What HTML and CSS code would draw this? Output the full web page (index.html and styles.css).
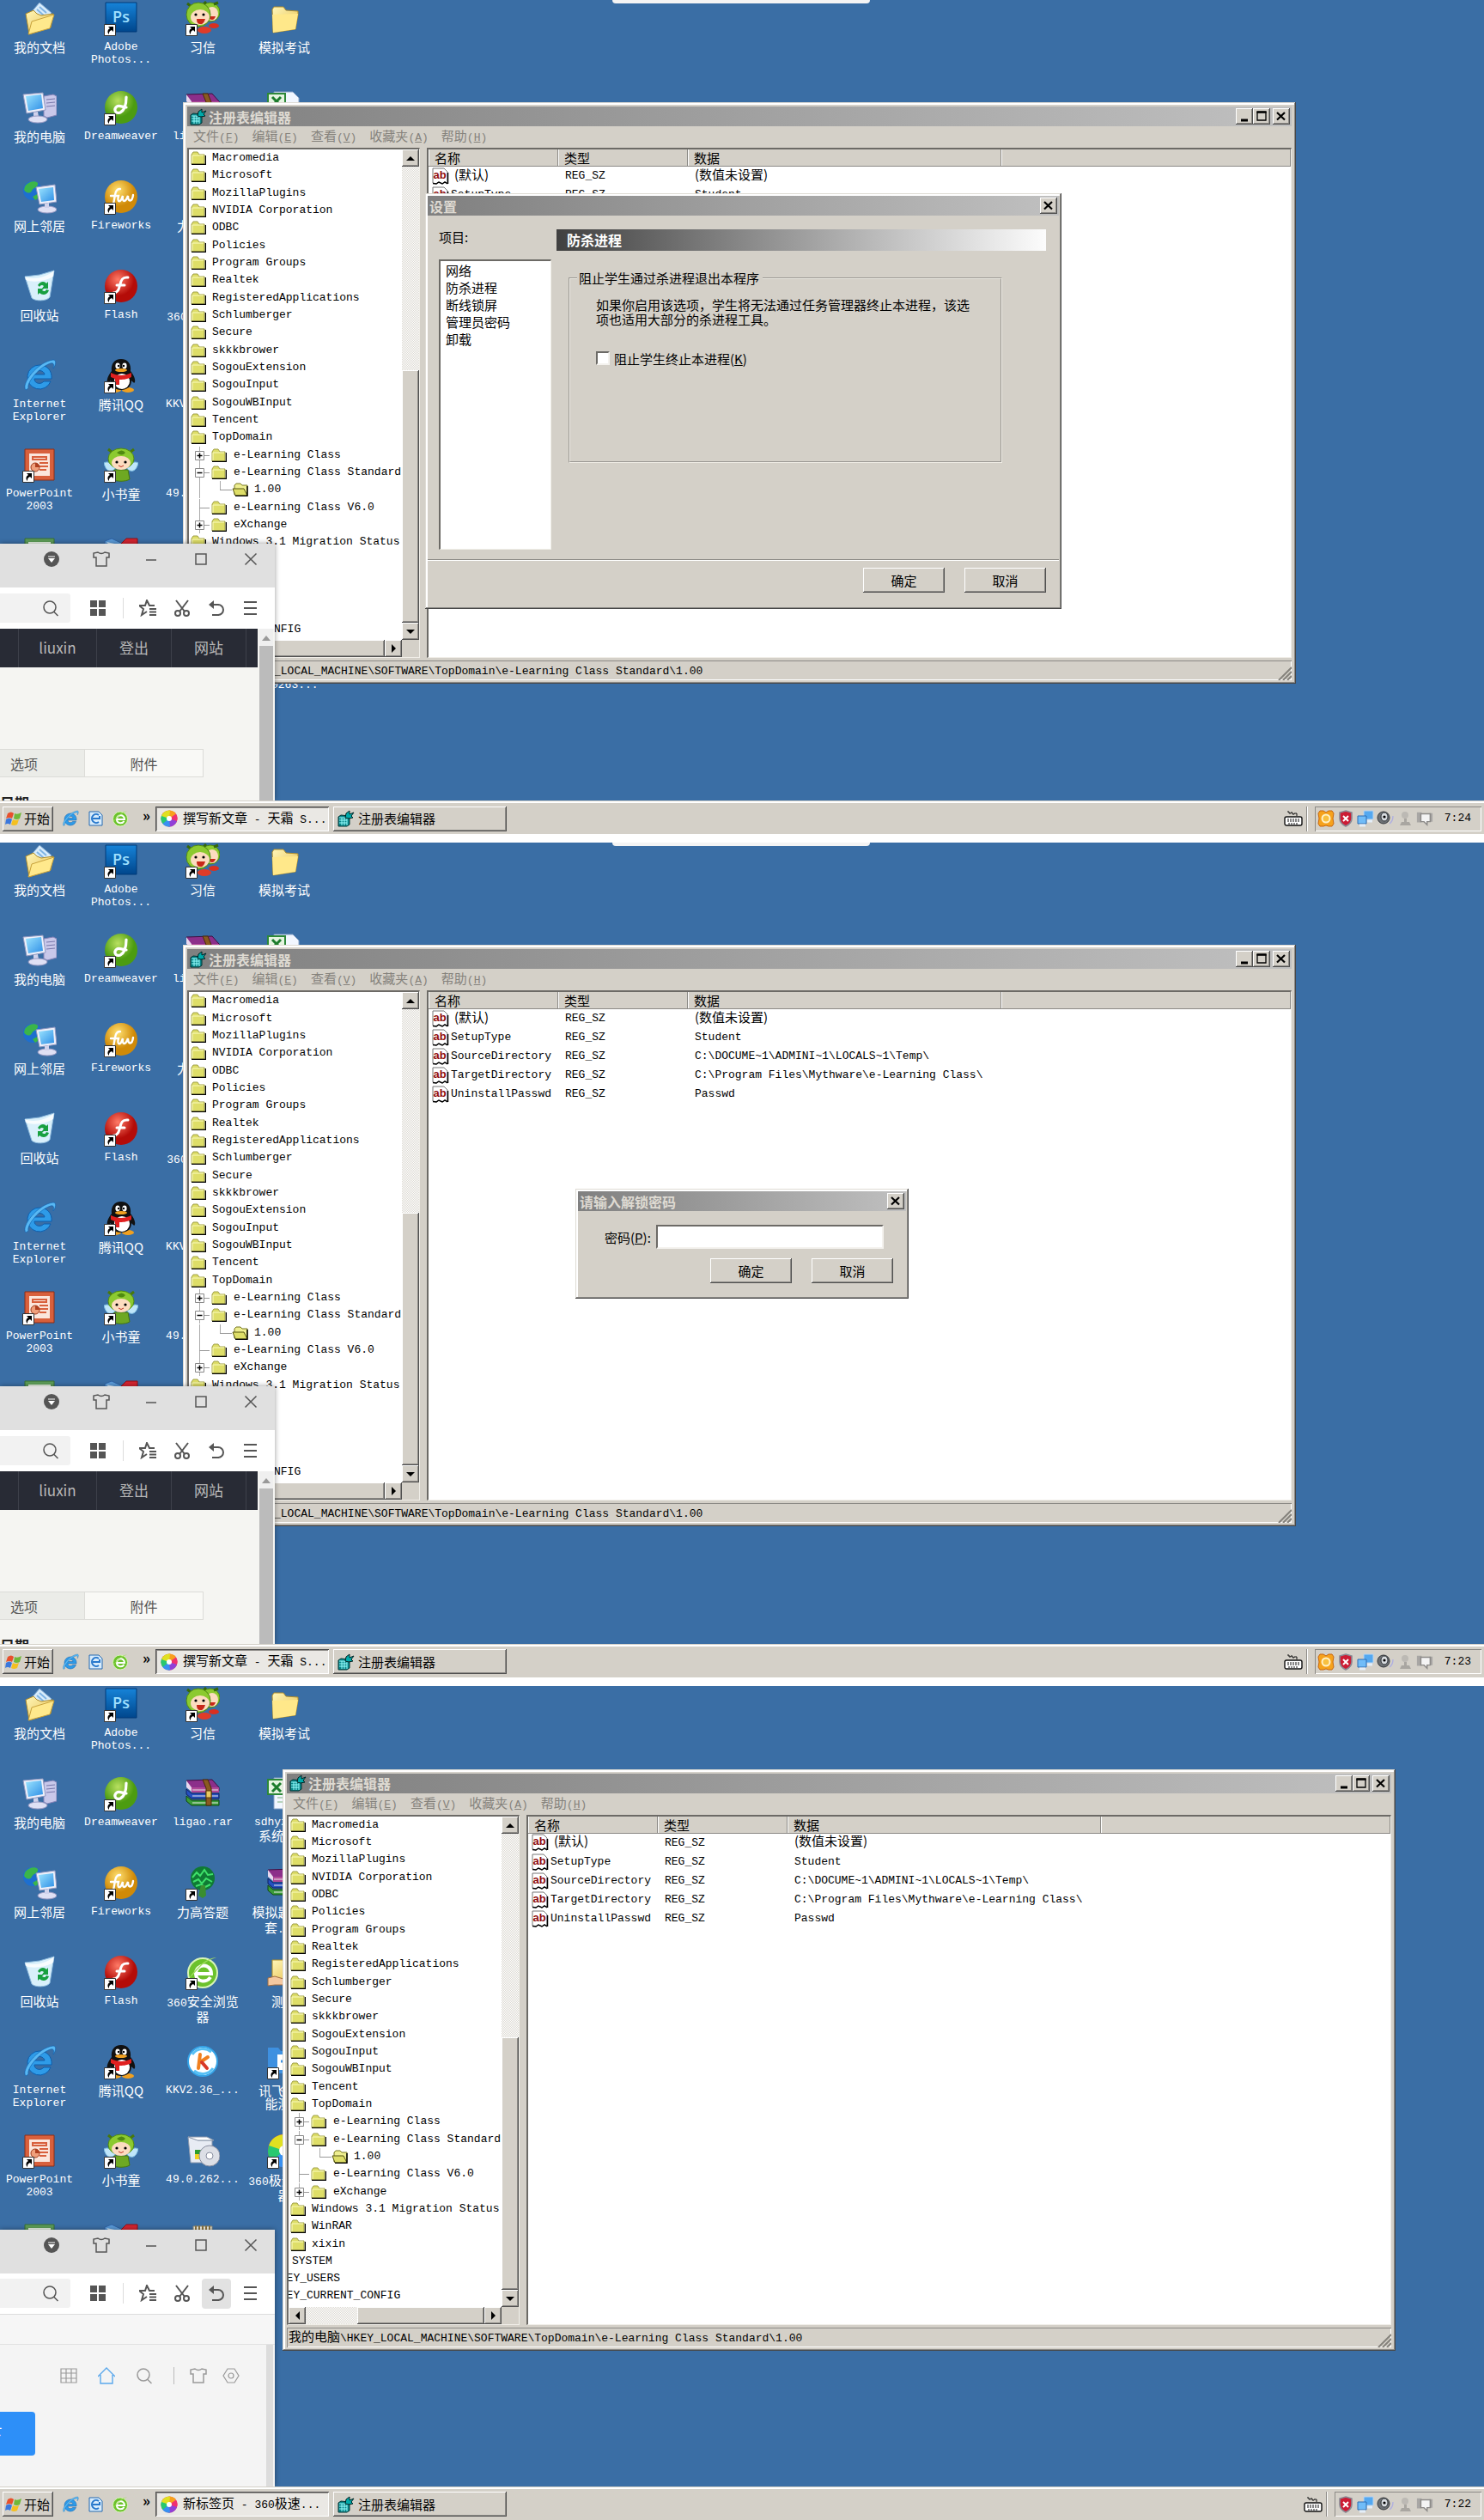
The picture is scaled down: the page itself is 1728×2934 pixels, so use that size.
FILE: index.html
```html
<!DOCTYPE html>
<html lang="zh-CN">
<head>
<meta charset="utf-8">
<title>注册表编辑器</title>
<link rel="stylesheet" href="styles.css">
</head>
<body>
<svg class="defs" aria-hidden="true">
<defs>
<linearGradient id="gPs" x1="0" y1="0" x2="0" y2="1"><stop offset="0" stop-color="#1683d8"/><stop offset="1" stop-color="#00468c"/></linearGradient>
<radialGradient id="gGreen" cx=".4" cy=".3"><stop offset="0" stop-color="#b8e060"/><stop offset="1" stop-color="#4c9c10"/></radialGradient>
<radialGradient id="gGold" cx=".4" cy=".3"><stop offset="0" stop-color="#ffe070"/><stop offset="1" stop-color="#d08a08"/></radialGradient>
<radialGradient id="gRed" cx=".4" cy=".3"><stop offset="0" stop-color="#ff7a66"/><stop offset="1" stop-color="#b40c08"/></radialGradient>
<linearGradient id="gScr" x1="0" y1="0" x2="1" y2="1"><stop offset="0" stop-color="#9be4ff"/><stop offset="1" stop-color="#2f8fe6"/></linearGradient>
<linearGradient id="gFold" x1="0" y1="0" x2="1" y2="1"><stop offset="0" stop-color="#fff6b8"/><stop offset="1" stop-color="#e6c050"/></linearGradient>
</defs>
<symbol id="docs" viewBox="0 0 40 40"><path d="M20 2l14 12-10 12L8 16z" fill="#d8ecfb" stroke="#7ea8d0"/><path d="M20 7l8 7M17 10l8 7" stroke="#7fb4e4" stroke-width="2"/><path d="M4 15l9-4 4 4 5 2 14-2-3 16-25 8z" fill="url(#gFold)" stroke="#b08c28"/><path d="M7 39l4-15 26-8-5 16z" fill="#ffe98c" stroke="#c8a23c"/></symbol>
<symbol id="folder" viewBox="0 0 40 40"><path d="M6 10l2-3h11l3 4 14 1v4l-3 17-26 4z" fill="url(#gFold)" stroke="#b08c28"/><path d="M6 16l30-1-3 18-26 4z" fill="#ffe88a"/></symbol>
<symbol id="pc" viewBox="0 0 40 40"><path d="M25 7l11-2 4 2v22l-11 3-4-2z" fill="#c9c8ea" stroke="#8684b8"/><path d="M28 11l10-1M28 15l10-1M28 19l10-1" stroke="#77a"/><path d="M1 5l23-2 3 20-22 4z" fill="#eef0fa" stroke="#9098c0"/><path d="M4 7l18-2 2 16-17 3z" fill="url(#gScr)"/><path d="M13 26l5-1 1 6-6 1z" fill="#d0d2ec"/><ellipse cx="18" cy="34" rx="11" ry="4" fill="#dfe0f4" stroke="#9a9cc4"/></symbol>
<symbol id="net" viewBox="0 0 40 40"><circle cx="12" cy="13" r="11" fill="#1d6fd0"/><path d="M3 8c4-6 12-7 15-4 1 5-5 5-7 9s-7 3-9-1zM12 20l7-4 2 4-6 4z" fill="#3bb54a"/><path d="M16 9l22-3 2 20-20 3z" fill="#eef0fa" stroke="#9098c0"/><path d="M19 11l17-2 1 15-15 2z" fill="url(#gScr)"/><ellipse cx="29" cy="35" rx="11" ry="4" fill="#dfe0f4" stroke="#9a9cc4"/><path d="M26 28l5-1v6h-5z" fill="#d0d2ec"/></symbol>
<symbol id="bin" viewBox="0 0 40 40"><path d="M3 9l17-2 17-5-5 31c-4 5-17 5-21 1z" fill="#d9f0fb" stroke="#8ab8dc"/><path d="M3 9c8 4 24 2 34-7l-1 7c-10 6-24 7-32 4z" fill="#fff" opacity=".8"/><path d="M18 19c3-5 8-5 10-2l2-2v8h-7l2-3c-2-2-4-1-5 1zM31 25c-2 6-8 6-11 3l-2 2v-7h7l-2 2c3 2 4 1 5-1z" fill="#18a040"/></symbol>
<symbol id="ie" viewBox="0 0 40 40"><path d="M20 8a14 14 0 1 0 13 19h-8c-3 4-11 3-11-3h20C35 14 28 8 20 8zm-6 11c1-6 11-6 12 0z" fill="#2e9be8" stroke="#0d5fae"/><path d="M4 37C-2 30 18 4 36 2c4 0 3 6 0 10 1-4 1-7-3-6C20 10 5 28 7 35z" fill="#58b8f4" stroke="#0d5fae" stroke-width=".6"/></symbol>
<symbol id="ppt" viewBox="0 0 40 40"><path d="M3 2h34v36H3z" fill="#d8603c" stroke="#8e2c14"/><path d="M8 7h24v26H8z" fill="#fbe6dc"/><path d="M12 11h16v3H12zM20 18h10M20 22h10M20 26h8" fill="none" stroke="#d8603c" stroke-width="2"/><circle cx="15" cy="23" r="5" fill="#f0a07c" stroke="#a03c1c"/><path d="M15 23v-5a5 5 0 0 1 5 5z" fill="#b04020"/></symbol>
<symbol id="xlrow" viewBox="0 0 40 40"><path d="M3 2h34v36H3z" fill="#5d9c58" stroke="#376e34"/><path d="M7 6h26v28H7z" fill="#e9f5e6"/></symbol>
<symbol id="ps" viewBox="0 0 40 40"><path d="M2 2h36v34H2z" fill="url(#gPs)" stroke="#003a78"/><text x="20" y="25" font-family="Open Sans,sans-serif" font-weight="600" font-size="18" fill="#9fe0ff" text-anchor="middle">Ps</text></symbol>
<symbol id="dw" viewBox="0 0 40 40"><circle cx="20" cy="20" r="19" fill="url(#gGreen)"/><path d="M26 8c0 8-1 15-7 18-6 2-8-4-4-7 3-2 7 1 11 1" fill="none" stroke="#fff" stroke-width="3.2" stroke-linecap="round"/></symbol>
<symbol id="fw" viewBox="0 0 40 40"><circle cx="20" cy="20" r="19" fill="url(#gGold)"/><path d="M19 11c-6-1-6 8-8 18M8 19h9c-2 8 2 9 5 0-1 8 3 8 6 0 0 8 5 7 6-1" fill="none" stroke="#fff" stroke-width="2.4" stroke-linecap="round"/></symbol>
<symbol id="fl" viewBox="0 0 40 40"><circle cx="20" cy="20" r="19" fill="url(#gRed)"/><path d="M28 10c-8-1-8 5-10 11-1 5-3 7-7 7M15 19h9" fill="none" stroke="#fff" stroke-width="3" stroke-linecap="round"/></symbol>
<symbol id="qq" viewBox="0 0 40 40"><ellipse cx="13" cy="37" rx="7" ry="3" fill="#f0a020"/><ellipse cx="28" cy="37" rx="7" ry="3" fill="#f0a020"/><path d="M20 1c8 0 12 6 11 14 4 5 6 10 5 13-1 2-3-1-4-2 0 7-5 11-12 11S8 33 8 26c-1 1-3 4-4 2-1-3 1-8 5-13C8 7 12 1 20 1z" fill="#111"/><ellipse cx="21" cy="27" rx="9" ry="9" fill="#fff"/><ellipse cx="16" cy="9" rx="2.6" ry="3.4" fill="#fff"/><ellipse cx="24" cy="9" rx="2.6" ry="3.4" fill="#fff"/><circle cx="17" cy="9" r="1.2"/><circle cx="23" cy="9" r="1.2"/><ellipse cx="20" cy="14" rx="7" ry="2" fill="#f0a020"/><path d="M8 17c8 4 16 4 24 0v5c-6 3-11 3-14 3v6h-5v-7l-5-2z" fill="#e02020"/></symbol>
<symbol id="bee" viewBox="0 0 40 40"><path d="M0 18c5-3 10 1 13 7-6 5-11 2-13-7zM40 18c-5-3-10 1-13 7 6 5 11 2 13-7z" fill="#bfe6fa" stroke="#78b8e0"/><path d="M12 26h16l2 11c-5 3-15 3-20 0z" fill="#6ea822" stroke="#47780c"/><path d="M10 6L5 2M30 6l5-4" stroke="#47780c" stroke-width="3"/><ellipse cx="20" cy="13" rx="15" ry="12" fill="#8cca30" stroke="#4f8a10"/><ellipse cx="20" cy="18" rx="11" ry="8" fill="#fcdcc0"/><circle cx="15" cy="17" r="1.600"/><circle cx="25" cy="17" r="1.600"/><path d="M17 21q3 3 6 0" stroke="#c03020" fill="none"/><path d="M15 6q6-5 10 0-4 5-10 0z" fill="#4f8a10"/></symbol>
<symbol id="redblue" viewBox="0 0 40 40"><path d="M1 5l8-3 13 6v18L1 34z" fill="#5a9ad8" stroke="#2e62a4"/><path d="M20 8l6-6h13v22l-16 4z" fill="#d42430" stroke="#8c1018"/><path d="M3 6l14 3-3 9z" fill="#cfe8fb"/></symbol>
<symbol id="xixin" viewBox="0 0 40 40"><ellipse cx="33" cy="29" rx="6" ry="3" fill="#d83020"/><circle cx="29" cy="13" r="11" fill="#8cca30" stroke="#4f8a10"/><ellipse cx="31" cy="15" rx="7" ry="8" fill="#fcdcc0"/><path d="M28 18h7q-2 6-7 3z" fill="#c82818"/><ellipse cx="22" cy="34" rx="8" ry="4" fill="#e03c28"/><path d="M6 6L2 3M20 5l4-4M33 4l5-2" stroke="#35680a" stroke-width="3"/><circle cx="15" cy="16" r="14" fill="#8cca30" stroke="#4f8a10"/><ellipse cx="17" cy="19" rx="11" ry="9" fill="#fcdcc0"/><circle cx="12" cy="16" r="1.600"/><circle cx="21" cy="16" r="1.600"/><path d="M13 21h10q-2 7-6 6-4 0-4-6z" fill="#c82818"/></symbol>
<symbol id="rar" viewBox="0 0 40 40"><path d="M1 5l30-1 8 9v4H7z" fill="#8c2f8a" stroke="#3c1040"/><path d="M1 5l6 8v5l-6-5z" fill="#e8d8ee"/><path d="M7 13h32v6H7z" fill="#b04898"/><path d="M1 15l6 5h32v6H7l-6-5z" fill="#2450c0" stroke="#102060"/><path d="M1 23l6 5h32v6H7l-6-5z" fill="#3a9c38" stroke="#104810"/><path d="M8 23h30M8 31h30M8 16h30" stroke="#e8e8e8"/><path d="M20 4h6l4 10v20h-6V14z" fill="#8a5a20" stroke="#4a2c08"/><path d="M24 17h6v8h-6z" fill="#e8c860" stroke="#5a3c08"/></symbol>
<symbol id="tree" viewBox="0 0 40 40"><circle cx="20" cy="15" r="14" fill="#0f7a34"/><path d="M8 14l5-6 4 4 5-7 4 6 6-1M9 19l6-3 4 5 5-6 7 4M12 24l6-2 5 3 6-3" stroke="#3ee06a" stroke-width="2" fill="none"/><path d="M18 23h5l1 12-4 3-5-3z" fill="#3a8e30"/></symbol>
<symbol id="e360" viewBox="0 0 40 40"><circle cx="20" cy="21" r="17" fill="#6cc22c" stroke="#d8f4b8" stroke-width="2"/><path d="M11 22h19c0-13-18-12-18 0 0 10 13 11 17 4" fill="none" stroke="#fff" stroke-width="4"/><path d="M4 28C12 14 26 3 36 3c-7 2-14 6-18 10" fill="#a4e060"/></symbol>
<symbol id="kk" viewBox="0 0 40 40"><circle cx="20" cy="20" r="17" fill="#fff" stroke="#35a4e8" stroke-width="2"/><path d="M8 12a15 15 0 0 1 22-3M32 28a15 15 0 0 1-22 3" stroke="#58c0f4" stroke-width="3" fill="none"/><path d="M17 12l-2 16M26 15l-9 6" stroke="#f08020" stroke-width="4" stroke-linecap="round"/><path d="M19 21l6 7" stroke="#d83828" stroke-width="4" stroke-linecap="round"/></symbol>
<symbol id="setup" viewBox="0 0 40 40"><path d="M3 4l12 4h16v26H6z" fill="#e8ecf4" stroke="#8c98ac"/><path d="M3 4h22l8 4H14z" fill="#fff" stroke="#8c98ac"/><path d="M11 19h10v11H11z" fill="#2c9c2c"/><path d="M11 24h7v6h-7z" fill="#f0d020"/><circle cx="28" cy="26" r="12" fill="#dcdfe6" stroke="#888ea0"/><circle cx="28" cy="26" r="4" fill="#fff" stroke="#888ea0"/></symbol>
<symbol id="note" viewBox="0 0 40 40"><path d="M9 4h22v34H9z" fill="#f4f2e4" stroke="#8c8a78"/><path d="M11 6h19" stroke="#8c7440" stroke-width="5" stroke-dasharray="2 2"/></symbol>
<symbol id="xls" viewBox="0 0 40 40"><path d="M8 2h22l7 7v29H8z" fill="#f2f7ff" stroke="#8aa4c8"/><path d="M12 20h22M12 25h22M12 30h22M20 16v20" stroke="#7ab07a"/><path d="M1 4h20v17H1z" fill="#e4f4e0" stroke="#2c8838" stroke-width="2"/><path d="M6 8l10 10M16 8L6 18" stroke="#1c7c2c" stroke-width="3"/></symbol>
<symbol id="share" viewBox="0 0 40 40"><path d="M6 6h12l3 4h15v18H6z" fill="url(#gFold)" stroke="#b08c28"/><path d="M1 27l8-2 10 3 12 1-8 6H9l-8 1z" fill="#f4c8a0" stroke="#a06c40"/></symbol>
<symbol id="app" viewBox="0 0 40 40"><path d="M1 4h12l3 4h22v26H1z" fill="#3e90e0"/><path d="M12 12h20v18H12z" fill="#fff"/><path d="M16 20h12" stroke="#3e90e0" stroke-width="3"/></symbol>
<symbol id="wheel" viewBox="0 0 40 40"><circle cx="20" cy="20" r="19" fill="#f04438"/><path d="M20 20L20 1A19 19 0 0 1 38 15z" fill="#f8a01c"/><path d="M20 20L36 9a19 19 0 0 1 1 19z" fill="#f03070"/><path d="M20 20l18 6A19 19 0 0 1 18 39z" fill="#9040d8"/><path d="M20 20l2 19A19 19 0 0 1 3 29z" fill="#3890f0"/><path d="M20 20L5 32A19 19 0 0 1 4 10z" fill="#28c870"/><path d="M20 20L2 14A19 19 0 0 1 22 1z" fill="#e0e020"/><circle cx="20" cy="20" r="6" fill="#fff"/></symbol>
<symbol id="reg" viewBox="0 0 20 20"><path d="M1 8l3-2 10 1v10l-3 2H1z" fill="#08868a" stroke="#033"/><path d="M2 9h9v9M5 9v9M8 9v9M2 12h9M2 15h9" stroke="#9ff" fill="none"/><path d="M10 4l4-3v4l5-2-3 4 2 2-5 1-4-1z" fill="#0aa" stroke="#022"/></symbol>
<symbol id="win" viewBox="0 0 20 20"><path d="M3 4q4-3 7 0L8 10q-3-2-7 0z" fill="#e8502c"/><path d="M11 4q3 2 8-1l-2 7q-4 2-7 0z" fill="#70b838"/><path d="M1 11q4-3 7 0l-2 6q-3-2-6 0z" fill="#3c78dc"/><path d="M9 11q3 2 7 0l-2 6q-4 2-7 0z" fill="#f4c020"/></symbol>
<symbol id="oe" viewBox="0 0 20 20"><path d="M3 2h11l4 4v12H3z" fill="#d8ecfc" stroke="#2468b0"/><path d="M14 6a5 5 0 1 0 0 8M7 10h8V7" fill="none" stroke="#2878cc" stroke-width="2"/></symbol>
<symbol id="kbd" viewBox="0 0 22 18"><path d="M4 1h2v2h2V2h2v2h2V3h3v3" stroke="#111" fill="none"/><rect x="1" y="7" width="20" height="10" rx="2" fill="#fff" stroke="#111" stroke-width="1.4"/><path d="M4 10h15M4 12h15M5 15h11" stroke="#111" stroke-width="1.2" stroke-dasharray="2 1"/></symbol>
<symbol id="org" viewBox="0 0 20 20"><path d="M3 1h4l3 2 3-2h4l2 3-1 6 1 6-2 3h-4l-3-1-3 1H3l-2-3 1-6-1-6z" fill="#f6a21c" stroke="#c8660c"/><circle cx="10" cy="10" r="4.500" fill="#f8c040" stroke="#fff2c8" stroke-width="2"/></symbol>
<symbol id="shield" viewBox="0 0 20 20"><path d="M10 1l7 2v7c0 5-3 7-7 9-4-2-7-4-7-9V3z" fill="#cc1c34" stroke="#8a8a94" stroke-width="1.6"/><path d="M7 7l6 6M13 7l-6 6" stroke="#fff" stroke-width="2"/></symbol>
<symbol id="lan" viewBox="0 0 20 20"><path d="M8 1h11v10H8z" fill="#54a8f0" stroke="#b8d4f0"/><path d="M1 7h10v9H1z" fill="#70bcf8" stroke="#2c6cb4"/><path d="M3 18h7M12 13h6" stroke="#e4eef8" stroke-width="3"/></symbol>
<symbol id="spk" viewBox="0 0 20 20"><circle cx="8" cy="9" r="7" fill="#6c7074" stroke="#34383c"/><ellipse cx="9" cy="8" rx="4" ry="5" fill="#d8dce0" stroke="#34383c"/><circle cx="9" cy="8" r="1.6"/><path d="M15 16q4-3 4-9" stroke="#b0b0e0" fill="none" stroke-width="1.4"/></symbol>
<symbol id="man" viewBox="0 0 20 20"><circle cx="10" cy="6" r="4" fill="#bcb9b4"/><path d="M9 10h3v4h3l2 4H4l2-4h3z" fill="#a9a6a1"/></symbol>
<symbol id="flag" viewBox="0 0 22 20"><path d="M1 2h6v13H1zM17 3h4v11h-4z" fill="#a8a6a4"/><path d="M6 4h12v10h-4v4l-4-4H6z" fill="#f4f4f4" stroke="#8c8a88" stroke-width="1.6"/></symbol>
<symbol id="min" viewBox="0 0 20 19"><path d="M6 14h8" stroke="#000" stroke-width="3"/></symbol>
<symbol id="max" viewBox="0 0 20 19"><path d="M5 4.500h10v9.500H5z" fill="none" stroke="#000" stroke-width="1.300"/><path d="M4.400 4.500h11.200" stroke="#000" stroke-width="2.500"/></symbol>
<symbol id="cls" viewBox="0 0 20 19"><path d="M5 5l9 8.500M14 5l-9 8.500" stroke="#000" stroke-width="2.200"/></symbol>
<symbol id="ab" viewBox="0 0 20 20"><path d="M1 1h13l4 4v13l-3-1-3 2-4-2-3 2-4-1z" fill="#fff" stroke="#777"/><path d="M18.500 6v13M1 18.500l4 .5 3-2 4 2 3-2 3 2" stroke="#000" stroke-width="1.500" fill="none"/><text x="9" y="13" font-family="Liberation Sans,sans-serif" font-weight="700" font-size="13" fill="#900c0c" text-anchor="middle">ab</text></symbol>
<symbol id="grip" viewBox="0 0 16 16"><path d="M1 16L16 1M6 16L16 6M11 16l5-5" stroke="#85827c" stroke-width="2"/></symbol>
<symbol id="badge" viewBox="0 0 20 20"><circle cx="10" cy="10" r="9" fill="#555"/><path d="M6 9h8l-4 5z" fill="#fff"/><path d="M6 7h8" stroke="#fff"/></symbol>
<symbol id="shirt" viewBox="0 0 20 20"><path d="M6 2q4 3 8 0l5 1v5h-3v10H4V8H1V3z" fill="none" stroke="currentColor" stroke-width="1.500"/></symbol>
<symbol id="bmin" viewBox="0 0 20 20"><path d="M4 11h12" stroke="#555" stroke-width="1.500"/></symbol>
<symbol id="bmax" viewBox="0 0 20 20"><path d="M4 4h12v12H4z" fill="none" stroke="#555" stroke-width="1.500"/></symbol>
<symbol id="bcls" viewBox="0 0 20 20"><path d="M3.500 3.500l13 13M16.500 3.500l-13 13" stroke="#555" stroke-width="1.500"/></symbol>
<symbol id="find" viewBox="0 0 20 20"><circle cx="9" cy="9" r="7" fill="none" stroke="currentColor" stroke-width="1.500"/><path d="M13.500 14l5 5" stroke="currentColor" stroke-width="1.500"/></symbol>
<symbol id="four" viewBox="0 0 20 20"><path d="M1 1h8v8H1zM11 1h8v8h-8zM1 11h8v8H1zM11 11h8v8h-8z" fill="#555"/></symbol>
<symbol id="star" viewBox="0 0 20 20"><path d="M18 7h-6L9 1 7 7H0l5 4-2 7 6-4M12 11h8M12 14.500h8M12 18h8" fill="none" stroke="#555" stroke-width="2"/></symbol>
<symbol id="cut" viewBox="0 0 20 20"><path d="M3 1l10 13M17 1L7 14" stroke="#555" stroke-width="2"/><circle cx="5" cy="16" r="3" fill="none" stroke="#555" stroke-width="2"/><circle cx="15" cy="16" r="3" fill="none" stroke="#555" stroke-width="2"/></symbol>
<symbol id="undo" viewBox="0 0 20 20"><path d="M3 6h9a6 6 0 0 1 0 12H5" fill="none" stroke="#555" stroke-width="2"/><path d="M7 1v10L1 6z" fill="#555"/></symbol>
<symbol id="bars" viewBox="0 0 20 20"><path d="M2 3h15M2 10h15M2 17h15" stroke="#555" stroke-width="2"/></symbol>
<symbol id="table" viewBox="0 0 20 20"><path d="M1 2h18v16H1zM1 7h18M1 13h18M7 2v16M13 2v16" fill="none" stroke="#999" stroke-width="1.200"/></symbol>
<symbol id="home" viewBox="0 0 20 20"><path d="M0 11L10 1l10 10M3 9v10h14V9" fill="none" stroke="#5aa8ec" stroke-width="1.400"/></symbol>
<symbol id="hex" viewBox="0 0 20 20"><path d="M6 2h8l5 8-5 8H6l-5-8z" fill="none" stroke="#999" stroke-width="1.200"/><circle cx="10" cy="10" r="3" fill="none" stroke="#999" stroke-width="1.200"/></symbol>
</svg>

<main class="page">

<section class="shot">
<div class="screen">
<nav class="icons">
<a href="#"><svg><use href="#docs"/></svg><b>我的文档</b></a>
<a href="#"><svg><use href="#pc"/></svg><b>我的电脑</b></a>
<a href="#"><svg><use href="#net"/></svg><b>网上邻居</b></a>
<a href="#"><svg><use href="#bin"/></svg><b>回收站</b></a>
<a href="#"><svg><use href="#ie"/></svg>Internet Explorer</a>
<a href="#" class="lnk"><svg><use href="#ppt"/></svg>PowerPoint 2003</a>
<a href="#"><svg><use href="#xlrow"/></svg></a>
<a href="#" class="lnk"><svg><use href="#ps"/></svg>Adobe Photos...</a>
<a href="#" class="lnk"><svg><use href="#dw"/></svg>Dreamweaver</a>
<a href="#" class="lnk"><svg><use href="#fw"/></svg>Fireworks</a>
<a href="#" class="lnk"><svg><use href="#fl"/></svg>Flash</a>
<a href="#" class="lnk"><svg><use href="#qq"/></svg><b>腾讯QQ</b></a>
<a href="#" class="lnk"><svg><use href="#bee"/></svg><b>小书童</b></a>
<a href="#"><svg><use href="#redblue"/></svg></a>
<a href="#" class="lnk"><svg><use href="#xixin"/></svg><b>习信</b></a>
<a href="#"><svg><use href="#rar"/></svg>ligao.rar</a>
<a href="#" class="lnk"><svg><use href="#tree"/></svg><b>力高答题</b></a>
<a href="#" class="lnk"><svg><use href="#e360"/></svg><span>360<b>安全浏览器</b></span></a>
<a href="#"><svg><use href="#kk"/></svg>KKV2.36_...</a>
<a href="#"><svg><use href="#setup"/></svg>49.0.262...</a>
<a href="#"><svg><use href="#note"/></svg></a>
<a href="#"><svg><use href="#folder"/></svg><b>模拟考试</b></a>
<a href="#"><svg><use href="#xls"/></svg></a>
</nav>
<div class="peek"></div>
<p class="stray">0263...</p>
<article class="win reg">
<header class="title"><svg><use href="#reg"/></svg><h2>注册表编辑器</h2><button aria-label="最小化"><svg><use href="#min"/></svg></button><button aria-label="最大化"><svg><use href="#max"/></svg></button><button class="x" aria-label="关闭"><svg><use href="#cls"/></svg></button></header>
<nav class="menu"><button>文件<i>(<u>F</u>)</i></button><button>编辑<i>(<u>E</u>)</i></button><button>查看<i>(<u>V</u>)</i></button><button>收藏夹<i>(<u>A</u>)</i></button><button>帮助<i>(<u>H</u>)</i></button></nav>
<div class="panes">
<div class="keys">
<ul class="tree"><li>Macromedia<li>Microsoft<li>MozillaPlugins<li>NVIDIA Corporation<li>ODBC<li>Policies<li>Program Groups<li>Realtek<li>RegisteredApplications<li>Schlumberger<li>Secure<li>skkkbrower<li>SogouExtension<li>SogouInput<li>SogouWBInput<li>Tencent<li>TopDomain<li class="sub plus">e-Learning Class<li class="sub minus">e-Learning Class Standard<li class="leaf">1.00<li class="sub">e-Learning Class V6.0<li class="sub plus">eXchange<li>Windows 3.1 Migration Status<li>WinRAR<li>xixin<li class="hive">SYSTEM<li class="root">HKEY_USERS<li class="root">HKEY_CURRENT_CONFIG</ul>
<div class="vbar"><button class="up" aria-label="上"></button><span></span><button class="down" aria-label="下"></button></div>
<div class="hbar"><button class="left" aria-label="左"></button><span></span><button class="right" aria-label="右"></button></div>
</div>
<div class="values"><table>
<thead><tr><th>名称<th>类型<th>数据<th></thead>
<tbody><tr><td><svg><use href="#ab"/></svg><q class="dflt">(默认)</q><td>REG_SZ<td><q>(数值未设置)</q><td><tr><td><svg><use href="#ab"/></svg>SetupType<td>REG_SZ<td>Student<td><tr><td><svg><use href="#ab"/></svg>SourceDirectory<td>REG_SZ<td>C:\DOCUME~1\ADMINI~1\LOCALS~1\Temp\<td><tr><td><svg><use href="#ab"/></svg>TargetDirectory<td>REG_SZ<td>C:\Program Files\Mythware\e-Learning Class\<td><tr><td><svg><use href="#ab"/></svg>UninstallPasswd<td>REG_SZ<td>Passwd<td></tbody>
</table></div>
</div>
<footer class="status"><span><q>我的电脑</q>\HKEY_LOCAL_MACHINE\SOFTWARE\TopDomain\e-Learning Class Standard\1.00</span><svg><use href="#grip"/></svg></footer>
</article>

<form class="win dlg settings">
<header class="title"><h2>设置</h2><button type="button" class="x" aria-label="关闭"><svg><use href="#cls"/></svg></button></header>
<div class="body">
<label for="items">项目:</label>
<h3>防杀进程</h3>
<select id="items" size="6"><option>网络<option>防杀进程<option>断线锁屏<option>管理员密码<option>卸载</select>
<fieldset><legend>阻止学生通过杀进程退出本程序</legend>
<p>如果你启用该选项，学生将无法通过任务管理器终止本进程，该选项也适用大部分的杀进程工具。</p>
<div class="tick"><input type="checkbox" id="kill"><label for="kill">阻止学生终止本进程(<u>K</u>)</label></div>
</fieldset>
</div>
<footer class="acts"><button type="button">确定</button><button type="button">取消</button></footer>
</form>

<aside class="browser">
<header><svg><use href="#badge"/></svg><svg><use href="#shirt"/></svg><svg><use href="#bmin"/></svg><svg><use href="#bmax"/></svg><svg><use href="#bcls"/></svg></header>
<div class="tools"><span class="find"><svg><use href="#find"/></svg></span><button class="apps" aria-label="应用"><svg><use href="#four"/></svg></button><hr><button aria-label="收藏"><svg><use href="#star"/></svg></button><button aria-label="截图"><svg><use href="#cut"/></svg></button><button aria-label="恢复"><svg><use href="#undo"/></svg></button><button aria-label="菜单"><svg><use href="#bars"/></svg></button></div>
<div class="view">
<div class="doc"><nav class="dark"><a href="#">liuxin</a><a href="#">登出</a><a href="#">网站</a></nav>
<div class="tabs"><button class="on">选项</button><button>附件</button></div><h4>日期</h4></div>
<div class="slide"></div>
</div>
</aside>
</div>
<footer class="taskbar"><button class="start"><svg><use href="#win"/></svg>开始</button>
<div class="quick"><svg><use href="#ie"/></svg><svg><use href="#oe"/></svg><svg><use href="#e360"/></svg><strong>»</strong></div>
<button class="task on"><svg><use href="#wheel"/></svg><span>撰写新文章<i> - </i>天霜<i> S...</i></span></button><button class="task"><svg><use href="#reg"/></svg><span>注册表编辑器</span></button>
<svg class="kbd"><use href="#kbd"/></svg>
<div class="tray"><svg><use href="#org"/></svg><svg><use href="#shield"/></svg><svg><use href="#lan"/></svg><svg><use href="#spk"/></svg><svg><use href="#man"/></svg><svg><use href="#flag"/></svg><time>7:24</time></div></footer>
</section>

<section class="shot">
<div class="screen">
<nav class="icons">
<a href="#"><svg><use href="#docs"/></svg><b>我的文档</b></a>
<a href="#"><svg><use href="#pc"/></svg><b>我的电脑</b></a>
<a href="#"><svg><use href="#net"/></svg><b>网上邻居</b></a>
<a href="#"><svg><use href="#bin"/></svg><b>回收站</b></a>
<a href="#"><svg><use href="#ie"/></svg>Internet Explorer</a>
<a href="#" class="lnk"><svg><use href="#ppt"/></svg>PowerPoint 2003</a>
<a href="#"><svg><use href="#xlrow"/></svg></a>
<a href="#" class="lnk"><svg><use href="#ps"/></svg>Adobe Photos...</a>
<a href="#" class="lnk"><svg><use href="#dw"/></svg>Dreamweaver</a>
<a href="#" class="lnk"><svg><use href="#fw"/></svg>Fireworks</a>
<a href="#" class="lnk"><svg><use href="#fl"/></svg>Flash</a>
<a href="#" class="lnk"><svg><use href="#qq"/></svg><b>腾讯QQ</b></a>
<a href="#" class="lnk"><svg><use href="#bee"/></svg><b>小书童</b></a>
<a href="#"><svg><use href="#redblue"/></svg></a>
<a href="#" class="lnk"><svg><use href="#xixin"/></svg><b>习信</b></a>
<a href="#"><svg><use href="#rar"/></svg>ligao.rar</a>
<a href="#" class="lnk"><svg><use href="#tree"/></svg><b>力高答题</b></a>
<a href="#" class="lnk"><svg><use href="#e360"/></svg><span>360<b>安全浏览器</b></span></a>
<a href="#"><svg><use href="#kk"/></svg>KKV2.36_...</a>
<a href="#"><svg><use href="#setup"/></svg>49.0.262...</a>
<a href="#"><svg><use href="#note"/></svg></a>
<a href="#"><svg><use href="#folder"/></svg><b>模拟考试</b></a>
<a href="#"><svg><use href="#xls"/></svg></a>
</nav>
<div class="peek"></div>
<article class="win reg">
<header class="title"><svg><use href="#reg"/></svg><h2>注册表编辑器</h2><button aria-label="最小化"><svg><use href="#min"/></svg></button><button aria-label="最大化"><svg><use href="#max"/></svg></button><button class="x" aria-label="关闭"><svg><use href="#cls"/></svg></button></header>
<nav class="menu"><button>文件<i>(<u>F</u>)</i></button><button>编辑<i>(<u>E</u>)</i></button><button>查看<i>(<u>V</u>)</i></button><button>收藏夹<i>(<u>A</u>)</i></button><button>帮助<i>(<u>H</u>)</i></button></nav>
<div class="panes">
<div class="keys">
<ul class="tree"><li>Macromedia<li>Microsoft<li>MozillaPlugins<li>NVIDIA Corporation<li>ODBC<li>Policies<li>Program Groups<li>Realtek<li>RegisteredApplications<li>Schlumberger<li>Secure<li>skkkbrower<li>SogouExtension<li>SogouInput<li>SogouWBInput<li>Tencent<li>TopDomain<li class="sub plus">e-Learning Class<li class="sub minus">e-Learning Class Standard<li class="leaf">1.00<li class="sub">e-Learning Class V6.0<li class="sub plus">eXchange<li>Windows 3.1 Migration Status<li>WinRAR<li>xixin<li class="hive">SYSTEM<li class="root">HKEY_USERS<li class="root">HKEY_CURRENT_CONFIG</ul>
<div class="vbar"><button class="up" aria-label="上"></button><span></span><button class="down" aria-label="下"></button></div>
<div class="hbar"><button class="left" aria-label="左"></button><span></span><button class="right" aria-label="右"></button></div>
</div>
<div class="values"><table>
<thead><tr><th>名称<th>类型<th>数据<th></thead>
<tbody><tr><td><svg><use href="#ab"/></svg><q class="dflt">(默认)</q><td>REG_SZ<td><q>(数值未设置)</q><td><tr><td><svg><use href="#ab"/></svg>SetupType<td>REG_SZ<td>Student<td><tr><td><svg><use href="#ab"/></svg>SourceDirectory<td>REG_SZ<td>C:\DOCUME~1\ADMINI~1\LOCALS~1\Temp\<td><tr><td><svg><use href="#ab"/></svg>TargetDirectory<td>REG_SZ<td>C:\Program Files\Mythware\e-Learning Class\<td><tr><td><svg><use href="#ab"/></svg>UninstallPasswd<td>REG_SZ<td>Passwd<td></tbody>
</table></div>
</div>
<footer class="status"><span><q>我的电脑</q>\HKEY_LOCAL_MACHINE\SOFTWARE\TopDomain\e-Learning Class Standard\1.00</span><svg><use href="#grip"/></svg></footer>
</article>

<form class="win dlg unlock">
<header class="title"><h2>请输入解锁密码</h2><button type="button" class="x" aria-label="关闭"><svg><use href="#cls"/></svg></button></header>
<div class="field"><label for="pw">密码(<u>P</u>):</label><input type="password" id="pw"></div>
<footer class="acts"><button type="button">确定</button><button type="button">取消</button></footer>
</form>

<aside class="browser">
<header><svg><use href="#badge"/></svg><svg><use href="#shirt"/></svg><svg><use href="#bmin"/></svg><svg><use href="#bmax"/></svg><svg><use href="#bcls"/></svg></header>
<div class="tools"><span class="find"><svg><use href="#find"/></svg></span><button class="apps" aria-label="应用"><svg><use href="#four"/></svg></button><hr><button aria-label="收藏"><svg><use href="#star"/></svg></button><button aria-label="截图"><svg><use href="#cut"/></svg></button><button aria-label="恢复"><svg><use href="#undo"/></svg></button><button aria-label="菜单"><svg><use href="#bars"/></svg></button></div>
<div class="view">
<div class="doc"><nav class="dark"><a href="#">liuxin</a><a href="#">登出</a><a href="#">网站</a></nav>
<div class="tabs"><button class="on">选项</button><button>附件</button></div><h4>日期</h4></div>
<div class="slide"></div>
</div>
</aside>
</div>
<footer class="taskbar"><button class="start"><svg><use href="#win"/></svg>开始</button>
<div class="quick"><svg><use href="#ie"/></svg><svg><use href="#oe"/></svg><svg><use href="#e360"/></svg><strong>»</strong></div>
<button class="task on"><svg><use href="#wheel"/></svg><span>撰写新文章<i> - </i>天霜<i> S...</i></span></button><button class="task"><svg><use href="#reg"/></svg><span>注册表编辑器</span></button>
<svg class="kbd"><use href="#kbd"/></svg>
<div class="tray"><svg><use href="#org"/></svg><svg><use href="#shield"/></svg><svg><use href="#lan"/></svg><svg><use href="#spk"/></svg><svg><use href="#man"/></svg><svg><use href="#flag"/></svg><time>7:23</time></div></footer>
</section>

<section class="shot">
<div class="screen">
<nav class="icons">
<a href="#"><svg><use href="#docs"/></svg><b>我的文档</b></a>
<a href="#"><svg><use href="#pc"/></svg><b>我的电脑</b></a>
<a href="#"><svg><use href="#net"/></svg><b>网上邻居</b></a>
<a href="#"><svg><use href="#bin"/></svg><b>回收站</b></a>
<a href="#"><svg><use href="#ie"/></svg>Internet Explorer</a>
<a href="#" class="lnk"><svg><use href="#ppt"/></svg>PowerPoint 2003</a>
<a href="#"><svg><use href="#xlrow"/></svg></a>
<a href="#" class="lnk"><svg><use href="#ps"/></svg>Adobe Photos...</a>
<a href="#" class="lnk"><svg><use href="#dw"/></svg>Dreamweaver</a>
<a href="#" class="lnk"><svg><use href="#fw"/></svg>Fireworks</a>
<a href="#" class="lnk"><svg><use href="#fl"/></svg>Flash</a>
<a href="#" class="lnk"><svg><use href="#qq"/></svg><b>腾讯QQ</b></a>
<a href="#" class="lnk"><svg><use href="#bee"/></svg><b>小书童</b></a>
<a href="#"><svg><use href="#redblue"/></svg></a>
<a href="#" class="lnk"><svg><use href="#xixin"/></svg><b>习信</b></a>
<a href="#"><svg><use href="#rar"/></svg>ligao.rar</a>
<a href="#" class="lnk"><svg><use href="#tree"/></svg><b>力高答题</b></a>
<a href="#" class="lnk"><svg><use href="#e360"/></svg><span>360<b>安全浏览器</b></span></a>
<a href="#"><svg><use href="#kk"/></svg>KKV2.36_...</a>
<a href="#"><svg><use href="#setup"/></svg>49.0.262...</a>
<a href="#"><svg><use href="#note"/></svg></a>
<a href="#"><svg><use href="#folder"/></svg><b>模拟考试</b></a>
<a href="#"><svg><use href="#xls"/></svg><span>sdhyz.xls<br><b>系统题库</b></span></a>
<a href="#"><svg><use href="#rar"/></svg><span><b>模拟题十二</b><br><b>套</b>.rar</span></a>
<a href="#"><svg><use href="#share"/></svg><b>测试</b></a>
<a href="#" class="lnk"><svg><use href="#app"/></svg><b>讯飞启明<br>能测试</b></a>
<a href="#" class="lnk"><svg><use href="#wheel"/></svg><span>360<b>极速浏览器</b></span></a>
</nav>
<article class="win reg moved">
<header class="title"><svg><use href="#reg"/></svg><h2>注册表编辑器</h2><button aria-label="最小化"><svg><use href="#min"/></svg></button><button aria-label="最大化"><svg><use href="#max"/></svg></button><button class="x" aria-label="关闭"><svg><use href="#cls"/></svg></button></header>
<nav class="menu"><button>文件<i>(<u>F</u>)</i></button><button>编辑<i>(<u>E</u>)</i></button><button>查看<i>(<u>V</u>)</i></button><button>收藏夹<i>(<u>A</u>)</i></button><button>帮助<i>(<u>H</u>)</i></button></nav>
<div class="panes">
<div class="keys">
<ul class="tree"><li>Macromedia<li>Microsoft<li>MozillaPlugins<li>NVIDIA Corporation<li>ODBC<li>Policies<li>Program Groups<li>Realtek<li>RegisteredApplications<li>Schlumberger<li>Secure<li>skkkbrower<li>SogouExtension<li>SogouInput<li>SogouWBInput<li>Tencent<li>TopDomain<li class="sub plus">e-Learning Class<li class="sub minus">e-Learning Class Standard<li class="leaf">1.00<li class="sub">e-Learning Class V6.0<li class="sub plus">eXchange<li>Windows 3.1 Migration Status<li>WinRAR<li>xixin<li class="hive">SYSTEM<li class="root">HKEY_USERS<li class="root">HKEY_CURRENT_CONFIG</ul>
<div class="vbar"><button class="up" aria-label="上"></button><span></span><button class="down" aria-label="下"></button></div>
<div class="hbar"><button class="left" aria-label="左"></button><span></span><button class="right" aria-label="右"></button></div>
</div>
<div class="values"><table>
<thead><tr><th>名称<th>类型<th>数据<th></thead>
<tbody><tr><td><svg><use href="#ab"/></svg><q class="dflt">(默认)</q><td>REG_SZ<td><q>(数值未设置)</q><td><tr><td><svg><use href="#ab"/></svg>SetupType<td>REG_SZ<td>Student<td><tr><td><svg><use href="#ab"/></svg>SourceDirectory<td>REG_SZ<td>C:\DOCUME~1\ADMINI~1\LOCALS~1\Temp\<td><tr><td><svg><use href="#ab"/></svg>TargetDirectory<td>REG_SZ<td>C:\Program Files\Mythware\e-Learning Class\<td><tr><td><svg><use href="#ab"/></svg>UninstallPasswd<td>REG_SZ<td>Passwd<td></tbody>
</table></div>
</div>
<footer class="status"><span><q>我的电脑</q>\HKEY_LOCAL_MACHINE\SOFTWARE\TopDomain\e-Learning Class Standard\1.00</span><svg><use href="#grip"/></svg></footer>
</article>

<aside class="browser newtab">
<header><svg><use href="#badge"/></svg><svg><use href="#shirt"/></svg><svg><use href="#bmin"/></svg><svg><use href="#bmax"/></svg><svg><use href="#bcls"/></svg></header>
<div class="tools"><span class="find"><svg><use href="#find"/></svg></span><button class="apps" aria-label="应用"><svg><use href="#four"/></svg></button><hr><button aria-label="收藏"><svg><use href="#star"/></svg></button><button aria-label="截图"><svg><use href="#cut"/></svg></button><button class="hot" aria-label="恢复"><svg><use href="#undo"/></svg></button><button aria-label="菜单"><svg><use href="#bars"/></svg></button></div>
<div class="strip"></div>
<div class="view">
<div class="doc"><nav class="marks"><svg><use href="#table"/></svg><svg><use href="#home"/></svg><svg><use href="#find"/></svg><hr><svg><use href="#shirt"/></svg><svg><use href="#hex"/></svg></nav>
<button class="go">下</button></div>
<div class="slide"></div>
</div>
</aside>
</div>
<footer class="taskbar"><button class="start"><svg><use href="#win"/></svg>开始</button>
<div class="quick"><svg><use href="#ie"/></svg><svg><use href="#oe"/></svg><svg><use href="#e360"/></svg><strong>»</strong></div>
<button class="task on"><svg><use href="#wheel"/></svg><span>新标签页<i> - 360</i>极速<i>...</i></span></button><button class="task"><svg><use href="#reg"/></svg><span>注册表编辑器</span></button>
<svg class="kbd"><use href="#kbd"/></svg>
<div class="tray"><svg><use href="#shield"/></svg><svg><use href="#lan"/></svg><svg><use href="#spk"/></svg><svg><use href="#man"/></svg><svg><use href="#flag"/></svg><time>7:22</time></div></footer>
</section>

</main>
</body>
</html>
```
FILE: styles.css
```css
:root {
  --face: #d4d0c8;
  --mono: "Liberation Mono", "Noto Sans CJK SC", monospace;
  --han: "Noto Sans CJK SC", sans-serif;
  --raised: inset -1px -1px #505050, inset 1px 1px #fff, inset -2px -2px #8c8a86;
}
* { box-sizing: border-box; }
body { margin: 0; background: #fff; font: 13px/16px var(--mono); color: #000; }
h2, h3, h4, p, ul { margin: 0; padding: 0; }
button { font: 15px/16px var(--han); color: inherit; border: 0; padding: 0; background: var(--face); }
a { color: inherit; text-decoration: none; }
i { font: 13px/16px var(--mono); }
q { quotes: none; font: 15px/16px var(--han); }
svg { display: block; flex: none; }
.defs { position: absolute; width: 0; height: 0; }

.page { display: grid; grid-template-rows: repeat(3, 1fr); gap: 10px; min-height: 100vh; }
.shot { display: grid; grid-template-rows: 1fr auto; background: #3a6ea5; overflow: hidden; min-height: 971px; }
.screen { position: relative; overflow: hidden; }

/* desktop icons */
.icons { display: grid; grid-auto-flow: column; grid-template-rows: repeat(7, 104px); grid-auto-columns: 92px; column-gap: 3px; padding-top: 1px; color: #fff; }
.icons a { display: flex; flex-direction: column; align-items: center; text-align: center; position: relative; overflow-wrap: anywhere; line-height: 15px; }
.icons svg { width: 40px; height: 40px; margin-bottom: 6px; }
.icons b { font: 15px/15px var(--han); }
.icons .lnk::after { content: ""; position: absolute; left: 26px; top: 27px; width: 14px; height: 14px; background: url("data:image/svg+xml,%3Csvg xmlns='http://www.w3.org/2000/svg' viewBox='0 0 14 14'%3E%3Cpath d='M.5 .5h13v13H.5z' fill='%23fff' stroke='%23333'/%3E%3Cpath d='M5 3h6v6L9 7c-3 1-3 3-3 5-3-3-1-6 1-7z'/%3E%3C/svg%3E"); }
.peek { position: absolute; left: 713px; top: 0; width: 300px; height: 4px; background: #f4f4f4; border-radius: 0 0 4px 4px; }
.stray { position: absolute; left: 316px; top: 790px; color: #fff; }

/* windows */
.win { position: absolute; display: flex; flex-direction: column; background: var(--face); box-shadow: inset -1px -1px #484848, inset 1px 1px #dedbd4, inset -2px -2px #8c8a86, inset 3px 3px #fff; }
.title { display: flex; align-items: center; height: 23px; padding: 0 2px; background: linear-gradient(90deg, #808080, #c0c0c0); color: #dedad2; }
.title h2 { flex: 1; font: 700 16px/20px var(--han); }
.title > svg { width: 20px; height: 20px; margin: 0 2px 0 1px; }
.title button { width: 20px; height: 19px; box-shadow: var(--raised); }
.title button svg { width: 20px; height: 19px; }
.title .x { margin-left: 3px; }
.reg { left: 213px; top: 119px; width: 75%; height: 677px; padding: 5px 5px 4px; }
.reg.moved { left: 329px; top: 97px; }
.menu { display: flex; height: 25px; align-items: center; color: #85827c; }
.menu button { padding: 0 8px 0 7px; }
.panes { flex: 1; display: grid; grid-template-columns: 271px 1fr; gap: 8px; min-height: 0; }
.keys, .values { background: #fff; border: solid; border-width: 2px 1px 1px 2px; border-color: #6c6a66 #f0eee8 #f0eee8 #6c6a66; min-width: 0; overflow: hidden; }
.keys { display: grid; grid-template: 1fr 20px / 1fr 20px; background: var(--face); }

.tree { display: grid; grid-auto-rows: 1fr; align-items: center; list-style: none; padding: 0 0 2px; background: #fff; overflow: hidden; white-space: pre; --fold: url("data:image/svg+xml,%3Csvg xmlns='http://www.w3.org/2000/svg' viewBox='0 0 19 16'%3E%3Cpath d='M2 4l2-3h5l2 3h6v11H2z' fill='%23dede68' stroke='%23a0a048'/%3E%3Cpath d='M3 14V5h13' fill='none' stroke='%23fbfbc0'/%3E%3Cpath d='M2 15.500h16.500V5' fill='none' stroke='%23000' stroke-width='1.500'/%3E%3C/svg%3E"); }
.tree li { height: 20px; line-height: 20px; padding-left: 27px; background: var(--fold) 1px 2px / 19px 16px no-repeat; }
.tree .sub { padding-left: 52px; background: var(--fold) 25px 2px / 19px 16px no-repeat, linear-gradient(#999, #999) 12px 10px / 12px 1px no-repeat, linear-gradient(#aaa, #aaa) 12px 0 / 1px 20px no-repeat; }
.tree .plus { background: url("data:image/svg+xml,%3Csvg xmlns='http://www.w3.org/2000/svg' viewBox='0 0 11 11'%3E%3Cpath d='M.5 .5h10v10H.5z' fill='%23fff' stroke='%23888'/%3E%3Cpath d='M2.500 5.500h6M5.500 2.500v6' stroke='%23000' stroke-width='1.500'/%3E%3C/svg%3E") 7px 5px / 11px 11px no-repeat, var(--fold) 25px 2px / 19px 16px no-repeat, linear-gradient(#999, #999) 12px 10px / 12px 1px no-repeat, linear-gradient(#aaa, #aaa) 12px 0 / 1px 20px no-repeat; }
.tree .minus { background: url("data:image/svg+xml,%3Csvg xmlns='http://www.w3.org/2000/svg' viewBox='0 0 11 11'%3E%3Cpath d='M.5 .5h10v10H.5z' fill='%23fff' stroke='%23888'/%3E%3Cpath d='M2.500 5.500h6' stroke='%23000' stroke-width='1.500'/%3E%3C/svg%3E") 7px 5px / 11px 11px no-repeat, var(--fold) 25px 2px / 19px 16px no-repeat, linear-gradient(#999, #999) 12px 10px / 12px 1px no-repeat, linear-gradient(#aaa, #aaa) 12px 0 / 1px 20px no-repeat; }
.tree .leaf { padding-left: 76px; background: url("data:image/svg+xml,%3Csvg xmlns='http://www.w3.org/2000/svg' viewBox='0 0 20 16'%3E%3Cpath d='M3 14V3l2-2h5l2 2h6v11z' fill='%23eeee90' stroke='%23777720'/%3E%3Cpath d='M1 7h13l4 8H4z' fill='%23dede68' stroke='%23555510'/%3E%3Cpath d='M18 4v11.500H4' fill='none' stroke='%23000' stroke-width='1.500'/%3E%3C/svg%3E") 50px 2px / 20px 16px no-repeat, linear-gradient(#999, #999) 36px 10px / 14px 1px no-repeat, linear-gradient(#aaa, #aaa) 36px 0 / 1px 10px no-repeat, linear-gradient(#aaa, #aaa) 12px 0 / 1px 20px no-repeat; }
.tree .hive { padding-left: 4px; background: none; }
.tree .root { padding: 0; text-indent: -18px; background: none; }

.vbar, .hbar { display: flex; background: repeating-conic-gradient(#fff 0 25%, #dcd9d2 0 50%) 0 0 / 2px 2px; }
.vbar { flex-direction: column; }
.vbar button, .hbar button { width: 20px; height: 20px; box-shadow: var(--raised); background: var(--face) no-repeat center; }
.vbar span, .hbar span { background: var(--face); box-shadow: var(--raised); }
.vbar span { height: 294px; margin-top: auto; }
.hbar span { width: 148px; margin-left: auto; }
.vbar .up { background-image: url("data:image/svg+xml,%3Csvg xmlns='http://www.w3.org/2000/svg' width='10' height='10'%3E%3Cpath d='M0 8l5-5 5 5z'/%3E%3C/svg%3E"); }
.vbar .down { background-image: url("data:image/svg+xml,%3Csvg xmlns='http://www.w3.org/2000/svg' width='10' height='10'%3E%3Cpath d='M0 3l5 5 5-5z'/%3E%3C/svg%3E"); }
.hbar .left { background-image: url("data:image/svg+xml,%3Csvg xmlns='http://www.w3.org/2000/svg' width='10' height='10'%3E%3Cpath d='M8 0L3 5l5 5z'/%3E%3C/svg%3E"); }
.hbar .right { background-image: url("data:image/svg+xml,%3Csvg xmlns='http://www.w3.org/2000/svg' width='10' height='10'%3E%3Cpath d='M3 0l5 5-5 5z'/%3E%3C/svg%3E"); }

table { width: 100%; table-layout: fixed; border-collapse: collapse; }
th { height: 20px; padding: 0 0 0 7px; background: var(--face); font: 15px/18px var(--han); text-align: left; box-shadow: inset -1px -1px #8c8a86, inset 1px 0 #fff; }
th:nth-child(1) { width: 151px; }
th:nth-child(2) { width: 151px; }
th:nth-child(3) { width: 365px; }
td { height: 22px; padding: 0 0 0 8px; line-height: 20px; white-space: pre; }
td:first-child { padding-left: 4px; }
td svg { float: left; width: 20px; height: 20px; margin-right: 2px; }
.dflt { padding-left: 4px; }
.status { display: flex; height: 23px; margin-top: 3px; align-items: center; justify-content: space-between; padding-left: 2px; box-shadow: inset 1px 1px #8c8a86, inset -1px -1px #fff; }
.status svg { width: 16px; height: 16px; align-self: end; }

/* dialogs */
.dlg { padding: 3px; font: 15px/17px var(--han); }
.acts { display: flex; justify-content: end; gap: 23px; padding-right: 15px; }
.acts button { width: 95px; height: 29px; box-shadow: var(--raised); }
.settings { left: 495px; top: 225px; width: 741px; height: 484px; }
.settings .body { display: grid; grid-template: 25px 338px / 131px 1fr; gap: 10px 6px; padding: 16px 15px 11px 13px; }
.settings h3 { font: 700 16px/25px var(--han); color: #fff; padding-left: 12px; background: linear-gradient(90deg, #404040, #fcfcfc); }
select { appearance: none; width: 100%; height: 100%; margin: 0; padding: 0; overflow: hidden; background: #fff; font: 15px/20px var(--han); color: #000; border: solid; border-width: 2px 1px 1px 2px; border-color: #6c6a66 #f0eee8 #f0eee8 #6c6a66; border-radius: 0; outline: 0; }
option { height: 20px; min-height: 20px; line-height: 20px; padding: 0 6px; }
fieldset { margin: 13px 51px 101px 14px; padding: 13px 30px 12px; border: 2px groove #eeebe4; min-width: 0; }
legend { padding: 0 4px 0 2px; margin-left: -22px; line-height: 18px; }
fieldset p { line-height: 17px; }
.tick { display: flex; align-items: center; gap: 5px; margin-top: 29px; height: 16px; }
.tick input, .field input { appearance: none; margin: 0; background: #fff; border: 2px solid; border-color: #6c6a66 #f4f2ee #f4f2ee #6c6a66; border-radius: 0; }
.tick input { width: 16px; height: 16px; }
.settings .acts { border-top: 1px solid #8c8a86; box-shadow: inset 0 1px #fff; padding-top: 9px; }
.unlock { left: 670px; top: 403px; width: 388px; height: 128px; }
.field { display: grid; grid-template-columns: 60px 1fr; align-items: center; padding: 16px 26px 11px 31px; }
.field input { width: 100%; height: 28px; }

/* browser */
.browser { position: absolute; left: 0; top: 633px; bottom: 0; width: 320px; display: flex; flex-direction: column; background: #fff; box-shadow: 0 0 6px #0006; color: #555; }
.browser svg { width: 20px; height: 20px; }
.browser header { display: flex; justify-content: end; gap: 38px; height: 51px; padding: 8px 18px 0 0; background: #e0e0e0; }
.tools { display: flex; height: 48px; align-items: center; }
.tools button { width: 34px; height: 35px; margin-right: 6px; background: none; display: grid; place-items: center; border-radius: 4px; }
.tools .find { width: 82px; height: 34px; padding: 7px 0 0 49px; background: #f2f2f2; border-radius: 0 3px 3px 0; }
.tools .apps { margin: 0 12px 0 15px; }
.tools hr { width: 1px; height: 24px; margin: 0 11px 0 0; border: 0; background: #ddd; }
.tools .hot { background: #e2e2e2; }
.view { flex: 1; display: flex; min-height: 0; background: #f5f5f2; overflow: hidden; }
.doc { flex: 1; overflow: hidden; }
.slide { width: 16px; margin-right: 2px; background: url("data:image/svg+xml,%3Csvg xmlns='http://www.w3.org/2000/svg' width='16' height='20'%3E%3Cpath d='M0 0h16v20H0z' fill='%23efefef'/%3E%3Cpath d='M3 14l5-6 5 6z' fill='%23999'/%3E%3C/svg%3E") no-repeat #bbb; }
.dark { display: grid; grid-template-columns: 91px 87px 88px; justify-content: end; padding-right: 13px; height: 45px; margin-right: 2px; background: #282b35; color: #b8b8b8; font: 17px/44px var(--han); text-align: center; }
.dark a { border-left: 1px solid #3d404a; }
.dark a:last-child { border-right: 1px solid #3d404a; }
.tabs { display: grid; grid-template-columns: 99px 138px; height: 33px; margin-top: 95px; }
.tabs button { background: #f9f9f6; border: 1px solid #dcdcd8; border-left: 0; font-size: 16px; }
.tabs .on { background: #ebece8; padding-right: 42px; }
.doc h4 { margin-top: 20px; font: 700 17px/20px var(--han); color: #222; }
.newtab .tools { border-bottom: 1px solid #ddd; }
.strip { height: 35px; background: #f6f6f6; border-bottom: 1px solid #e2e2e2; }
.newtab .view { background: #f4f4f4; }
.newtab .slide { width: 8px; background: #dcdcdc; }
.marks { display: grid; grid-template-columns: 26px 26px 26px 1px 20px 20px; justify-content: end; column-gap: 18px; align-items: center; height: 72px; padding-right: 31px; color: #999; }
.marks hr { width: 1px; height: 20px; margin: 0; border: 0; background: #bbb; }
.go { width: 41px; height: 51px; margin-top: 6px; background: #2d8ff8; color: #fff; border-radius: 0 4px 4px 0; font-size: 18px; text-indent: -54px; overflow: hidden; }

/* taskbar */
.taskbar { display: flex; align-items: center; height: 39px; padding: 3px 3px 0; background: var(--face); box-shadow: inset 0 1px #d4d0c8, inset 0 3px #fff; }
.taskbar svg { width: 20px; height: 20px; }
.start { display: flex; align-items: center; width: 59px; height: 29px; padding-left: 3px; gap: 2px; box-shadow: var(--raised); }
.quick { display: flex; align-items: center; width: 119px; gap: 9px; padding-left: 10px; }
.quick strong { font: 700 17px/17px var(--han); padding: 0 0 10px 7px; }
.task { display: flex; align-items: center; gap: 4px; width: 202px; height: 29px; margin-right: 5px; padding-left: 5px; box-shadow: var(--raised); white-space: pre; }
.task.on { gap: 6px; padding-left: 6px; background: #eae8e4; box-shadow: inset 1px 1px #505050, inset -1px -1px #fff, inset 2px 2px #8c8a86; }
.taskbar .kbd { width: 22px; height: 18px; margin: 0 14px 0 auto; }
.tray { display: flex; align-items: center; gap: 3px; height: 29px; padding: 0 12px 0 3px; box-shadow: inset 1px 1px #8c8a86, inset -1px -1px #fff, -8px 0 var(--face), -9px 0 #fff, -10px 0 #8c8a86; }
.tray time { margin-left: 10px; }
```
